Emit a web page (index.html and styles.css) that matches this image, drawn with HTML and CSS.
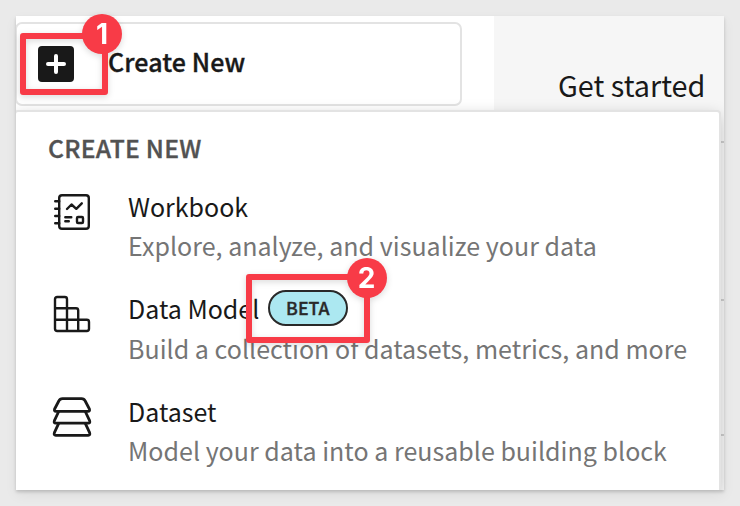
FILE: index.html
```html
<!DOCTYPE html>
<html lang="en">
<head>
<meta charset="utf-8">
<title>Create New</title>
<link rel="stylesheet" href="styles.css">
</head>
<body>
<main class="window">
  <header class="topbar">
    <button class="create">
      <svg class="plus" width="36" height="36" viewBox="0 0 36 36"><rect width="36" height="36" rx="4" fill="#191919"/><path d="M18 10v16M10 18h16" stroke="#fff" stroke-width="4" stroke-linecap="round"/></svg>
      <span class="create-label">Create New</span>
    </button>
    <div class="started"><span class="started-label">Get started</span></div>
  </header>
  <div class="tick tick-a"></div>
  <div class="tick tick-b"></div>
  <div class="tick tick-c"></div>
  <section class="menu">
    <h2 class="heading">CREATE NEW</h2>
    <div class="item">
      <svg class="icon" width="44" height="44" viewBox="0 0 44 44"><g fill="none" stroke="#191919" stroke-width="2.4" stroke-linecap="round" stroke-linejoin="round"><rect x="9.2" y="5.2" width="29.6" height="33.6" rx="2.8"/><path d="M5.2 11.3h4M5.2 18.7h4M5.2 26h4M5.2 33.3h4M17 19l4.5-4.5 4.8 4.3 5.5-5.5M15.3 27.3h6M15.3 31.3h3.5"/><rect x="27" y="27" width="6" height="6" rx="1"/></g></svg>
      <div class="copy"><div class="title">Workbook</div><div class="desc">Explore, analyze, and visualize your data</div></div>
    </div>
    <div class="item">
      <svg class="icon" width="44" height="44" viewBox="0 0 44 44"><path d="M7.2 5h7.6q2.2 0 2.2 2.2v9.1h9q2.2 0 2.2 2.2v9.2h8.6q2.2 0 2.2 2.2V36.8q0 2.2-2.2 2.2H7.2q-2.2 0-2.2-2.2V7.2q0-2.2 2.2-2.2ZM5 16.3h12v22.700M5 27.7h23.200V39" fill="none" stroke="#191919" stroke-width="2.4" stroke-linejoin="round"/></svg>
      <div class="copy copy-model"><div class="title">Data Model<span class="beta"><span class="beta-label">BETA</span></span></div><div class="desc">Build a collection of datasets, metrics, and more</div></div>
    </div>
    <div class="item">
      <svg class="icon" width="44" height="44" viewBox="0 0 44 44"><g fill="none" stroke="#191919" stroke-width="2.8" stroke-linejoin="round"><path d="M12.500 3.700h19q2.600 0 3.700 2.300l4.200 8q.8 2.300-1.500 2.300H6.100q-2.300 0-1.500-2.300l4.200-8q1.100-2.300 3.700-2.300Z"/><path d="M8.700 16.500 4.400 25.600q-.9 2.600 1.400 2.600h32.400q2.300 0 1.400-2.600l-4.300-9.100"/><path d="M8.700 28.400 4.400 37.700q-.9 2.600 1.400 2.600h32.400q2.300 0 1.400-2.600l-4.300-9.300"/></g></svg>
      <div class="copy"><div class="title">Dataset</div><div class="desc">Model your data into a reusable building block</div></div>
    </div>
  </section>
</main>
<div class="callout callout-one"><span class="badge">1</span></div>
<div class="callout callout-two"><span class="badge">2</span></div>
</body>
</html>
```
FILE: styles.css
```css
* { box-sizing: border-box; }
body {
  margin: 0;
  padding: 16px;
  width: 740px;
  height: 506px;
  overflow: hidden;
  background: #eaeaea;
  font-family: "Noto Sans CJK SC", "Noto Sans", sans-serif;
  color: #191919;
}
.window {
  position: relative;
  width: 708px;
  height: 474px;
  overflow: hidden;
  background: #fff;
}
body::before {
  content: "";
  position: absolute;
  left: 16px;
  top: 16px;
  width: 708px;
  height: 474px;
  box-shadow: 0 2px 3px rgba(0,0,0,.17), 0 5px 12px rgba(0,0,0,.06);
}
.topbar { display: flex; height: 474px; }
.create {
  display: flex;
  align-items: center;
  width: 447px;
  height: 84px;
  margin: 6px 32px 0 -1px;
  padding: 0 0 0 21px;
  border: 2px solid #e3e3e3;
  border-radius: 7px;
  background: #fff;
  font: inherit;
  color: inherit;
}
.create-label {
  margin: -7px 0 0 34px;
  font-size: 25px;
  font-weight: 500;
  line-height: 36px;
  letter-spacing: .1px;
  -webkit-text-stroke: .35px currentColor;
}
.started { flex: 1; padding: 49px 0 0 64px; background: #f6f6f6; }
.started-label { display: block; font-size: 28.8px; line-height: 40px; white-space: nowrap; }
.tick { position: absolute; left: 704px; width: 4px; height: 2px; background: #ccc; }
.tick-a { top: 125px; }
.tick-b { top: 283px; }
.tick-c { top: 418px; }
.menu {
  position: absolute;
  left: 0;
  top: 96px;
  width: 703px;
  height: 378px;
  border-radius: 2px 2px 0 0;
  background: #fff;
  box-shadow: 0 0 0 2px #e3e3e3, 0 4px 16px rgba(0,0,0,.25);
}
.heading {
  margin: 0;
  padding: 17px 0 0 32px;
  height: 75px;
  color: #525252;
  font-size: 24.7px;
  font-weight: 500;
  line-height: 36px;
  letter-spacing: .25px;
  -webkit-text-stroke: .35px currentColor;
}
.item { display: flex; height: 102.3px; padding-left: 34px; }
.icon { flex: none; margin-top: 3px; }
.copy { margin-left: 34px; white-space: nowrap; }
.title { display: flex; height: 39px; font-size: 25px; line-height: 39px; }
.copy-model .title { height: 40px; }
.desc { color: #757575; font-size: 25px; line-height: 39px; letter-spacing: .025px; }
.beta {
  display: flex;
  justify-content: center;
  width: 80px;
  height: 36px;
  margin: 1px 0 0 9px;
  padding-right: 1px;
  border: 2px solid #292929;
  border-radius: 18px;
  background: #ace8f1;
  color: #292929;
}
.beta-label {
  font-size: 17.7px;
  font-weight: 500;
  line-height: 31px;
  -webkit-text-stroke: .35px currentColor;
}
.callout {
  position: absolute;
  border: 6px solid #f83b47;
  border-radius: 3px;
  filter: drop-shadow(0 2px 3px rgba(0,0,0,.15));
}
.callout-one { left: 20px; top: 33px; width: 88px; height: 62px; }
.callout-two { left: 246px; top: 274px; width: 124px; height: 69px; }
.badge {
  position: absolute;
  width: 40px;
  height: 40px;
  border-radius: 50%;
  background: #f83b47;
  color: #fff;
  font: 700 28px/40px Inter, sans-serif;
  text-align: center;
}
.callout-one .badge { left: 56px; top: -25px; }
.callout-two .badge { left: 94.5px; top: -22px; }
```
